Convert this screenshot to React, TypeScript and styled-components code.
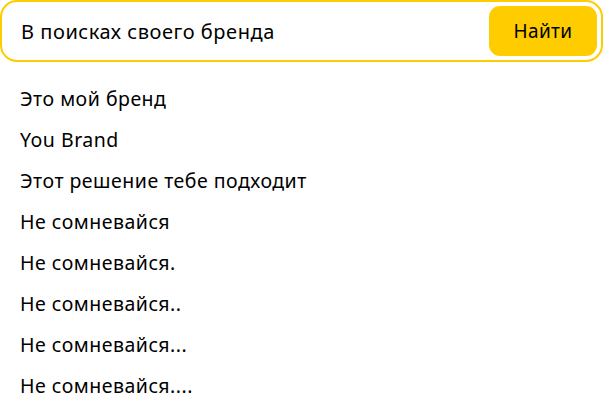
import React from 'react';
import styled, { createGlobalStyle } from 'styled-components';

const GlobalStyle = createGlobalStyle`
  body {
    margin: 0;
    background: #ffffff;
    font-family: "Noto Sans", "Open Sans", sans-serif;
    color: #000000;
  }
`;

const ITEMS = [
  'Это мой бренд',
  'You Brand',
  'Этот решение тебе подходит',
  'Не сомневайся',
  'Не сомневайся.',
  'Не сомневайся..',
  'Не сомневайся...',
  'Не сомневайся....',
];

const Page = styled.div`
  width: 603px;
`;

const SearchBox = styled.form`
  display: flex;
  align-items: center;
  box-sizing: border-box;
  height: 62px;
  padding: 4px 4px 4px 19px;
  border: 2px solid #ffcc00;
  border-radius: 17px;
`;

const SearchInput = styled.input`
  flex: 1;
  min-width: 0;
  border: none;
  outline: none;
  background: transparent;
  font-family: inherit;
  font-size: 20px;
  letter-spacing: 0.55px;
  color: #000000;
  padding: 0;
`;

const SearchButton = styled.button`
  width: 108px;
  height: 50px;
  border: none;
  border-radius: 11px;
  background: #ffcc00;
  font-family: inherit;
  font-size: 19px;
  letter-spacing: 0.4px;
  color: #000000;
  cursor: pointer;
`;

const Suggestions = styled.ul`
  list-style: none;
  margin: 0;
  padding: 25px 0 0 20px;
  display: flex;
  flex-direction: column;
  gap: 17px;
`;

const Suggestion = styled.li`
  font-size: 19.5px;
  letter-spacing: 0.5px;
  line-height: 24px;
  cursor: pointer;
`;

const App = () => (
  <Page>
    <GlobalStyle />
    <SearchBox onSubmit={e => e.preventDefault()}>
      <SearchInput defaultValue="В поисках своего бренда" />
      <SearchButton type="submit">Найти</SearchButton>
    </SearchBox>
    <Suggestions>
      {ITEMS.map(text => (
        <Suggestion key={text}>{text}</Suggestion>
      ))}
    </Suggestions>
  </Page>
);

export default App;
